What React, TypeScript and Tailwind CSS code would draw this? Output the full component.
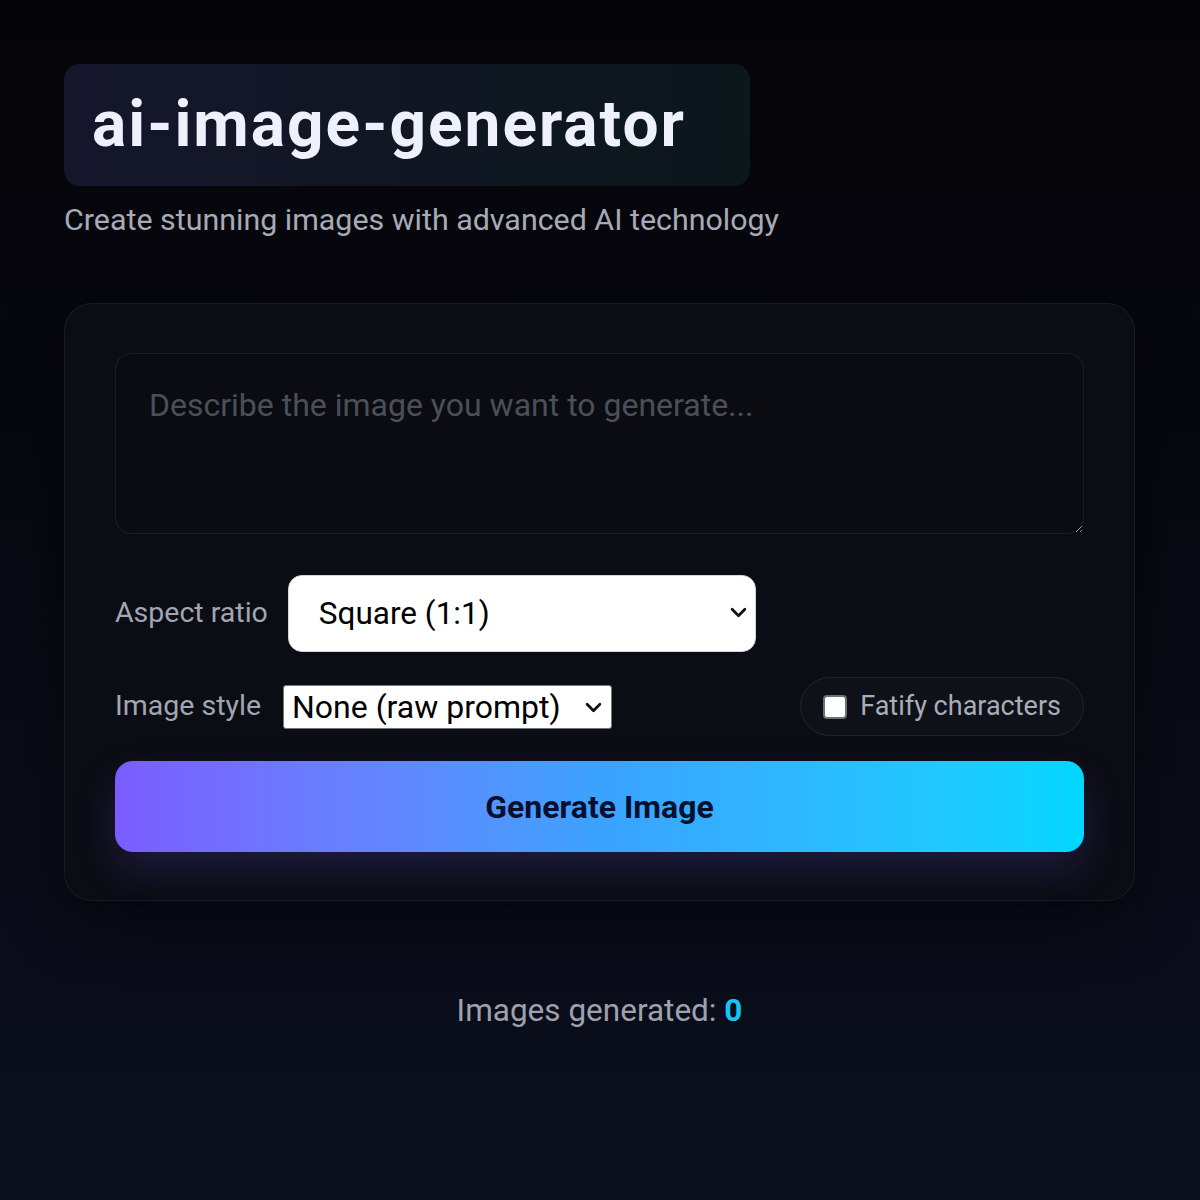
import { useState } from 'react'

const ASPECT_RATIOS = ['Square (1:1)', 'Portrait (3:4)', 'Landscape (4:3)', 'Wide (16:9)']
const STYLES = ['None (raw prompt)', 'Photorealistic', 'Anime', 'Oil painting']

function Chevron({ className }: { className: string }) {
  return (
    <svg viewBox="0 0 16 10" className={className} fill="none">
      <path d="M2 2l6 6 6-6" stroke="#111" strokeWidth="2.6" strokeLinecap="round" strokeLinejoin="round" />
    </svg>
  )
}

export default function App() {
  const [prompt, setPrompt] = useState('')
  const [ratio, setRatio] = useState(ASPECT_RATIOS[0])
  const [style, setStyle] = useState(STYLES[0])
  const [fatify, setFatify] = useState(false)
  const [count] = useState(0)

  return (
    <div
      className="min-h-[1200px] w-full bg-linear-to-b from-[#050508] to-[#0b0f1d] px-16 pt-16"
      style={{ fontFamily: 'Roboto, "Liberation Sans", sans-serif' }}
    >
      <div className="inline-block rounded-2xl bg-linear-to-r from-[#15162b] to-[#0b171b] py-7 pr-[64px] pl-7">
        <h1 className="text-[64px] font-bold leading-[66px] tracking-[2px] text-[#eef0fb]">
          ai-image-generator
        </h1>
      </div>
      <p className="mt-[16px] text-[30.4px] leading-[36px] text-[#a7abb8]">
        Create stunning images with advanced AI technology
      </p>

      <div className="mt-[65px] w-[1071px] rounded-[28px] border border-white/[0.06] bg-[#0b0d14] px-[50px] pt-[49px] pb-[48px] shadow-[0_20px_60px_rgba(0,0,0,0.45)]">
        <textarea
          value={prompt}
          onChange={(e) => setPrompt(e.target.value)}
          placeholder="Describe the image you want to generate..."
          className="block h-[181px] w-full rounded-2xl border border-white/[0.07] bg-[#0a0c12] px-[33px] py-[32px] text-[32px] leading-[38px] text-gray-200 outline-none placeholder:text-[#4c4f58]"
        />

        <div className="mt-[41px] flex items-center gap-5">
          <label className="text-[28.5px] text-[#a2a6b2]">Aspect ratio</label>
          <div className="relative">
            <select
              value={ratio}
              onChange={(e) => setRatio(e.target.value)}
              className="block h-[77px] w-[468px] appearance-none rounded-[14px] border border-gray-300 bg-white px-[30px] text-[31.5px] text-black"
            >
              {ASPECT_RATIOS.map((r) => (
                <option key={r}>{r}</option>
              ))}
            </select>
            <Chevron className="pointer-events-none absolute top-[32px] right-[9px] h-[11px] w-[17px]" />
          </div>
        </div>

        <div className="mt-[25px] flex items-center justify-between">
          <div className="flex items-center gap-[22px]">
            <label className="text-[28.5px] text-[#a2a6b2]">Image style</label>
            <div className="relative">
              <select
                value={style}
                onChange={(e) => setStyle(e.target.value)}
                className="block h-[44px] w-[329px] appearance-none rounded-[3px] border border-[#767676] bg-white pl-[8px] text-[32px] leading-[40px] text-black"
              >
                {STYLES.map((s) => (
                  <option key={s}>{s}</option>
                ))}
              </select>
              <Chevron className="pointer-events-none absolute top-[17px] right-[10px] h-[11px] w-[17px]" />
            </div>
          </div>
          <label className="flex h-[59px] items-center gap-[13px] rounded-full border border-white/[0.07] bg-white/[0.02] px-[22px] text-[27px] text-[#a9adb9]">
            <input
              type="checkbox"
              checked={fatify}
              onChange={(e) => setFatify(e.target.checked)}
              className="h-[24px] w-[24px] appearance-none rounded-[4px] border-2 border-[#6b6f78] bg-white checked:bg-[#16c5f5]"
            />
            Fatify characters
          </label>
        </div>

        <button className="mt-[25px] h-[91px] w-full rounded-[18px] bg-linear-to-r from-[#7b5cff] via-[#3aa2ff] to-[#00d8ff] text-[32px] font-bold text-[#0a0f2e] shadow-[0_18px_40px_rgba(110,90,255,0.18)]">
          Generate Image
        </button>
      </div>

      <p className="mt-[92px] w-[1071px] text-center text-[31.5px] leading-[36px] text-[#9ea2ae]">
        Images generated: <span className="font-bold text-[#16c5f5]">{count}</span>
      </p>
    </div>
  )
}
